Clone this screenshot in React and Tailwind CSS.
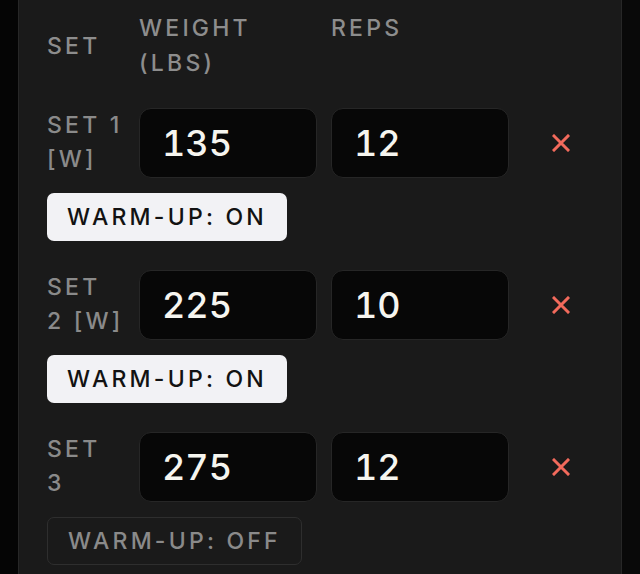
import React from "react";

const sets = [
  { lines: ["SET 1", "[W]"], weight: "135", reps: "12", warm: true },
  { lines: ["SET", "2 [W]"], weight: "225", reps: "10", warm: true },
  { lines: ["SET", "3"], weight: "275", reps: "12", warm: false },
];

function XIcon() {
  return (
    <svg width="18" height="18" viewBox="0 0 18 18" fill="none">
      <path d="M2 2L16 16M16 2L2 16" stroke="#f26a5c" strokeWidth="3" strokeLinecap="square" />
    </svg>
  );
}

function NumField({ value }) {
  return (
    <div className="h-[70px] rounded-[12px] border border-[#262626] bg-[#070707] flex items-center pl-[22px] text-[36px] font-medium text-[#f6f5ef] leading-none tabular-nums">
      {value}
    </div>
  );
}

export default function App() {
  return (
    <div
      className="min-h-screen w-full flex bg-[#050505]"
      style={{ fontFamily: "Inter, 'DejaVu Sans', sans-serif" }}
    >
      <div className="w-[18px] shrink-0 bg-[#050505]" />
      <div className="w-[604px] shrink-0 bg-[#1a1a1a] border-x border-[#272727] pl-[28px] pr-[28px] pt-[11px] pb-[9px]">
        <div className="grid grid-cols-[78px_178px_178px_1fr] gap-x-[14px] text-[23px] leading-[35px] tracking-[0.14em] font-medium text-[#8d8d8d]">
          <div className="self-center">SET</div>
          <div>
            WEIGHT
            <br />
            (LBS)
          </div>
          <div className="self-start">REPS</div>
          <div />
        </div>
        <div className="flex flex-col mt-[27px] gap-[29px]">
          {sets.map((s, i) => (
            <div key={i} className="flex flex-col gap-[15px]">
              <div className="grid grid-cols-[78px_178px_178px_1fr] gap-x-[14px]">
                <div className="text-[23px] leading-[34px] tracking-[0.14em] font-medium text-[#8a8a8a] whitespace-nowrap">
                  {s.lines[0]}
                  <br />
                  {s.lines[1]}
                </div>
                <NumField value={s.weight} />
                <NumField value={s.reps} />
                <div className="flex items-center">
                  <button className="ml-[18px] w-[40px] h-[40px] flex items-center justify-center">
                    <XIcon />
                  </button>
                </div>
              </div>
              {s.warm ? (
                <button className="w-[240px] h-[48px] rounded-[7px] bg-[#f2f2f5] text-[#121212] text-[23px] font-medium tracking-[0.14em] flex items-center justify-center whitespace-nowrap">
                  WARM-UP: ON
                </button>
              ) : (
                <button className="w-[255px] h-[48px] rounded-[7px] border border-[#2e2e2e] bg-transparent text-[#8a8a8a] text-[23px] font-medium tracking-[0.14em] flex items-center justify-center whitespace-nowrap">
                  WARM-UP: OFF
                </button>
              )}
            </div>
          ))}
        </div>
      </div>
      <div className="flex-1 bg-[#090909]" />
    </div>
  );
}
